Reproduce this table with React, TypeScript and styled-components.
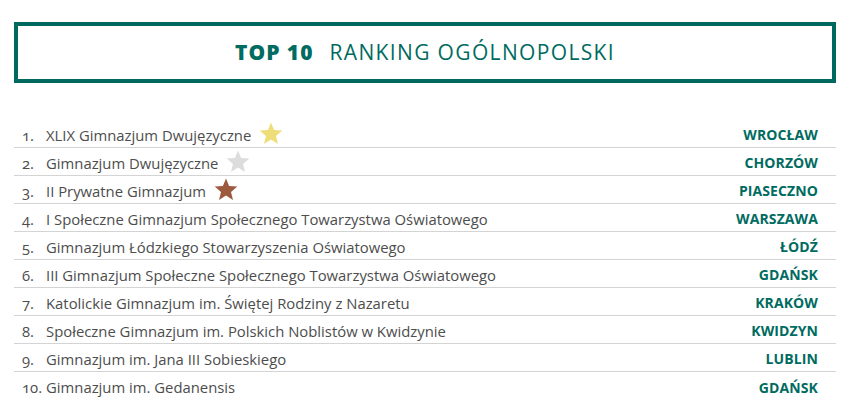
import React from "react";
import styled, { createGlobalStyle } from "styled-components";

const Global = createGlobalStyle`
  html, body { margin: 0; padding: 0; background: #ffffff; }
  body { font-family: "Open Sans", "Liberation Sans", sans-serif; }
`;

const Page = styled.div`
  width: 850px;
  height: 420px;
  box-sizing: border-box;
  padding: 22px 14px 0 14px;
  display: flex;
  flex-direction: column;
`;

const TitleBox = styled.div`
  height: 61px;
  box-sizing: border-box;
  border: 4px solid #00695f;
  display: flex;
  align-items: center;
  justify-content: center;
  color: #006b60;
  font-size: 21px;
  padding-bottom: 2px;
`;

const TitleBold = styled.span`
  font-weight: 800;
  letter-spacing: 1px;
  margin-right: 16px;
`;

const TitleLight = styled.span`
  font-weight: 400;
  letter-spacing: 1.35px;
`;

const List = styled.ol`
  list-style: none;
  margin: 37px 0 0 0;
  padding: 0;
  display: flex;
  flex-direction: column;
`;

const Row = styled.li<{ $last?: boolean }>`
  height: 28px;
  box-sizing: border-box;
  display: flex;
  align-items: center;
  border-bottom: ${(p) => (p.$last ? "none" : "1px solid #d4d4d4")};
  padding: 2px 18px 0 8px;
  font-size: 14.85px;
  color: #4d4d4d;
`;

const Num = styled.span`
  width: 24px;
  flex: none;
  font-variant-numeric: oldstyle-nums;
`;

const Name = styled.span`
  display: flex;
  align-items: center;
  gap: 8px;
  flex: 1;
  white-space: nowrap;
`;

const City = styled.span`
  font-weight: 700;
  color: #006b60;
  font-size: 14px;
  letter-spacing: 0.1px;
`;

const StarIcon = ({ color }: { color: string }) => (
  <svg width="24" height="23" viewBox="0 0 24 23" style={{ marginTop: -3 }}>
    <polygon
      points="12,0.5 15.1,8.1 23.3,8.6 17,13.9 19,21.9 12,17.5 5,21.9 7,13.9 0.7,8.6 8.9,8.1"
      fill={color}
    />
  </svg>
);

const data: { name: string; city: string; star?: string }[] = [
  { name: "XLIX Gimnazjum Dwujęzyczne", city: "WROCŁAW", star: "#eedd78" },
  { name: "Gimnazjum Dwujęzyczne", city: "CHORZÓW", star: "#dcdcdc" },
  { name: "II Prywatne Gimnazjum", city: "PIASECZNO", star: "#9e5a3e" },
  { name: "I Społeczne Gimnazjum Społecznego Towarzystwa Oświatowego", city: "WARSZAWA" },
  { name: "Gimnazjum Łódzkiego Stowarzyszenia Oświatowego", city: "ŁÓDŹ" },
  { name: "III Gimnazjum Społeczne Społecznego Towarzystwa Oświatowego", city: "GDAŃSK" },
  { name: "Katolickie Gimnazjum im. Świętej Rodziny z Nazaretu", city: "KRAKÓW" },
  { name: "Społeczne Gimnazjum im. Polskich Noblistów w Kwidzynie", city: "KWIDZYN" },
  { name: "Gimnazjum im. Jana III Sobieskiego", city: "LUBLIN" },
  { name: "Gimnazjum im. Gedanensis", city: "GDAŃSK" },
];

export default function App() {
  return (
    <>
      <Global />
      <Page>
        <TitleBox>
          <TitleBold>TOP 10</TitleBold>
          <TitleLight>RANKING OGÓLNOPOLSKI</TitleLight>
        </TitleBox>
        <List>
          {data.map((d, i) => (
            <Row key={i} $last={i === data.length - 1}>
              <Num>{i + 1}.</Num>
              <Name>
                {d.name}
                {d.star && <StarIcon color={d.star} />}
              </Name>
              <City>{d.city}</City>
            </Row>
          ))}
        </List>
      </Page>
    </>
  );
}
